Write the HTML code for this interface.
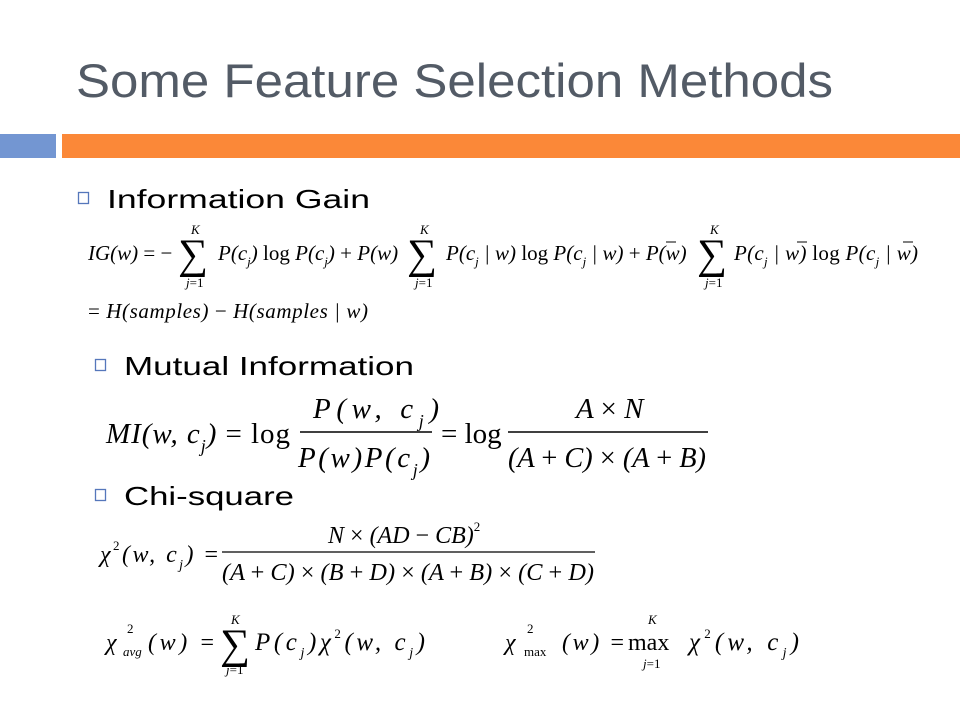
<!DOCTYPE html>
<html><head><meta charset="utf-8"><style>
html,body{margin:0;padding:0;background:#fff;width:960px;height:720px;overflow:hidden}
svg{display:block}
.t{font-family:"Liberation Sans",sans-serif}
.m{font-family:"Liberation Serif",serif;font-style:italic;fill:#000}
.r{font-family:"Liberation Serif",serif;fill:#000}
.u{font-style:normal}
</style></head><body>
<svg width="960" height="720" viewBox="0 0 960 720" xmlns="http://www.w3.org/2000/svg">
<text x="76" y="97" class="t" font-size="47" fill="#535b66" textLength="757" lengthAdjust="spacingAndGlyphs">Some Feature Selection Methods</text>
<rect x="0" y="134" width="56" height="24" fill="#7396d2"/>
<rect x="62" y="134" width="898" height="24" fill="#fb8838"/>

<rect x="78.5" y="192.5" width="10" height="11" fill="none" stroke="#5577bb" stroke-width="1.3"/>
<text x="107" y="208" class="t" font-size="26" fill="#000" textLength="263" lengthAdjust="spacingAndGlyphs">Information Gain</text>

<!-- IG formula -->
<text x="88" y="260" class="m" font-size="21">IG(w) <tspan class="u">= −</tspan></text>
<text x="178" y="268" class="r" font-size="42">∑</text>
<text x="191" y="234" class="m" font-size="13">K</text>
<text x="186" y="287" class="m" font-size="13">j<tspan class="u">=1</tspan></text>
<text x="218" y="260" class="m" font-size="21">P(c<tspan font-size="13" dy="6">j</tspan><tspan dy="-6">)</tspan><tspan class="u"> log </tspan>P(c<tspan font-size="13" dy="6">j</tspan><tspan dy="-6">)</tspan><tspan class="u"> + </tspan>P(w)</text>
<text x="407" y="268" class="r" font-size="42">∑</text>
<text x="420" y="234" class="m" font-size="13">K</text>
<text x="415" y="287" class="m" font-size="13">j<tspan class="u">=1</tspan></text>
<text x="446" y="260" class="m" font-size="21">P(c<tspan font-size="13" dy="6">j</tspan><tspan dy="-6"> | w)</tspan><tspan class="u"> log </tspan>P(c<tspan font-size="13" dy="6">j</tspan><tspan dy="-6"> | w)</tspan><tspan class="u"> + </tspan>P(w)</text>
<text x="697" y="268" class="r" font-size="42">∑</text>
<text x="710" y="234" class="m" font-size="13">K</text>
<text x="705" y="287" class="m" font-size="13">j<tspan class="u">=1</tspan></text>
<text x="734" y="260" class="m" font-size="21" textLength="184" lengthAdjust="spacing">P(c<tspan font-size="13" dy="6">j</tspan><tspan dy="-6"> | w)</tspan><tspan class="u"> log </tspan>P(c<tspan font-size="13" dy="6">j</tspan><tspan dy="-6"> | w)</tspan></text>
<line x1="666" y1="242" x2="676" y2="242" stroke="#000" stroke-width="1"/>
<line x1="797" y1="242" x2="807" y2="242" stroke="#000" stroke-width="1"/>
<line x1="903" y1="242" x2="913" y2="242" stroke="#000" stroke-width="1"/>
<text x="88" y="318" class="m" font-size="21" textLength="280" lengthAdjust="spacing"><tspan class="u">= </tspan>H(samples) <tspan class="u">− </tspan>H(samples | w)</text>

<rect x="95.5" y="359.5" width="10" height="11" fill="none" stroke="#5577bb" stroke-width="1.3"/>
<text x="124" y="375" class="t" font-size="26" fill="#000" textLength="290" lengthAdjust="spacingAndGlyphs">Mutual Information</text>

<!-- MI -->
<text x="106" y="443" class="m" font-size="29" textLength="184" lengthAdjust="spacing">MI(w, c<tspan font-size="18" dy="9">j</tspan><tspan dy="-9">)</tspan><tspan class="u"> = log</tspan></text>
<text x="313" y="418" class="m" font-size="29" textLength="126" lengthAdjust="spacing">P(w, c<tspan font-size="18" dy="9">j</tspan><tspan dy="-9">)</tspan></text>
<line x1="300" y1="432" x2="432" y2="432" stroke="#000" stroke-width="1.5"/>
<text x="298" y="467" class="m" font-size="29" textLength="132" lengthAdjust="spacing">P(w)P(c<tspan font-size="18" dy="9">j</tspan><tspan dy="-9">)</tspan></text>
<text x="441" y="443" class="r" font-size="29">= log</text>
<text x="576" y="418" class="m" font-size="29">A <tspan class="u">×</tspan> N</text>
<line x1="508" y1="432" x2="708" y2="432" stroke="#000" stroke-width="1.5"/>
<text x="508" y="467" class="m" font-size="29" textLength="198" lengthAdjust="spacingAndGlyphs">(A <tspan class="u">+</tspan> C) <tspan class="u">×</tspan> (A <tspan class="u">+</tspan> B)</text>

<rect x="95.5" y="489.5" width="10" height="11" fill="none" stroke="#5577bb" stroke-width="1.3"/>
<text x="124" y="505" class="t" font-size="26" fill="#000" textLength="170" lengthAdjust="spacingAndGlyphs">Chi-square</text>

<!-- chi -->
<text x="100" y="562" class="m" font-size="24" textLength="118" lengthAdjust="spacing">χ<tspan class="u" font-size="13" dy="-12">2</tspan><tspan dy="12">(w, c</tspan><tspan font-size="14" dy="7">j</tspan><tspan dy="-7">)</tspan><tspan class="u"> =</tspan></text>
<text x="328" y="543" class="m" font-size="24">N <tspan class="u">×</tspan> (AD <tspan class="u">−</tspan> CB)<tspan class="u" font-size="13" dy="-12">2</tspan></text>
<line x1="222" y1="552" x2="595" y2="552" stroke="#000" stroke-width="1.2"/>
<text x="222" y="580" class="m" font-size="24" textLength="372" lengthAdjust="spacingAndGlyphs">(A <tspan class="u">+</tspan> C) <tspan class="u">×</tspan> (B <tspan class="u">+</tspan> D) <tspan class="u">×</tspan> (A <tspan class="u">+</tspan> B) <tspan class="u">×</tspan> (C <tspan class="u">+</tspan> D)</text>

<!-- avg -->
<text x="106" y="650" class="m" font-size="24">χ</text>
<text x="127" y="633" class="r" font-size="13">2</text>
<text x="123" y="656" class="m" font-size="13">avg</text>
<text x="148" y="650" class="m" font-size="24" textLength="66" lengthAdjust="spacing">(w) <tspan class="u">=</tspan></text>
<text x="220" y="658" class="r" font-size="42">∑</text>
<text x="231" y="624" class="m" font-size="13">K</text>
<text x="226" y="674" class="m" font-size="13">j<tspan class="u">=1</tspan></text>
<text x="255" y="650" class="m" font-size="25" textLength="170" lengthAdjust="spacing">P(c<tspan font-size="14" dy="7">j</tspan><tspan dy="-7">)χ</tspan><tspan class="u" font-size="13" dy="-12">2</tspan><tspan dy="12">(w, c</tspan><tspan font-size="14" dy="7">j</tspan><tspan dy="-7">)</tspan></text>

<text x="505" y="650" class="m" font-size="24">χ</text>
<text x="527" y="633" class="r" font-size="13">2</text>
<text x="524" y="656" class="r" font-size="13">max</text>
<text x="562" y="650" class="m" font-size="24" textLength="62" lengthAdjust="spacing">(w) <tspan class="u">=</tspan></text>
<text x="628" y="650" class="r" font-size="24">max</text>
<text x="648" y="624" class="m" font-size="13">K</text>
<text x="643" y="668" class="m" font-size="13">j<tspan class="u">=1</tspan></text>
<text x="689" y="650" class="m" font-size="25" textLength="110" lengthAdjust="spacing">χ<tspan class="u" font-size="13" dy="-12">2</tspan><tspan dy="12">(w, c</tspan><tspan font-size="14" dy="7">j</tspan><tspan dy="-7">)</tspan></text>
</svg>
</body></html>
